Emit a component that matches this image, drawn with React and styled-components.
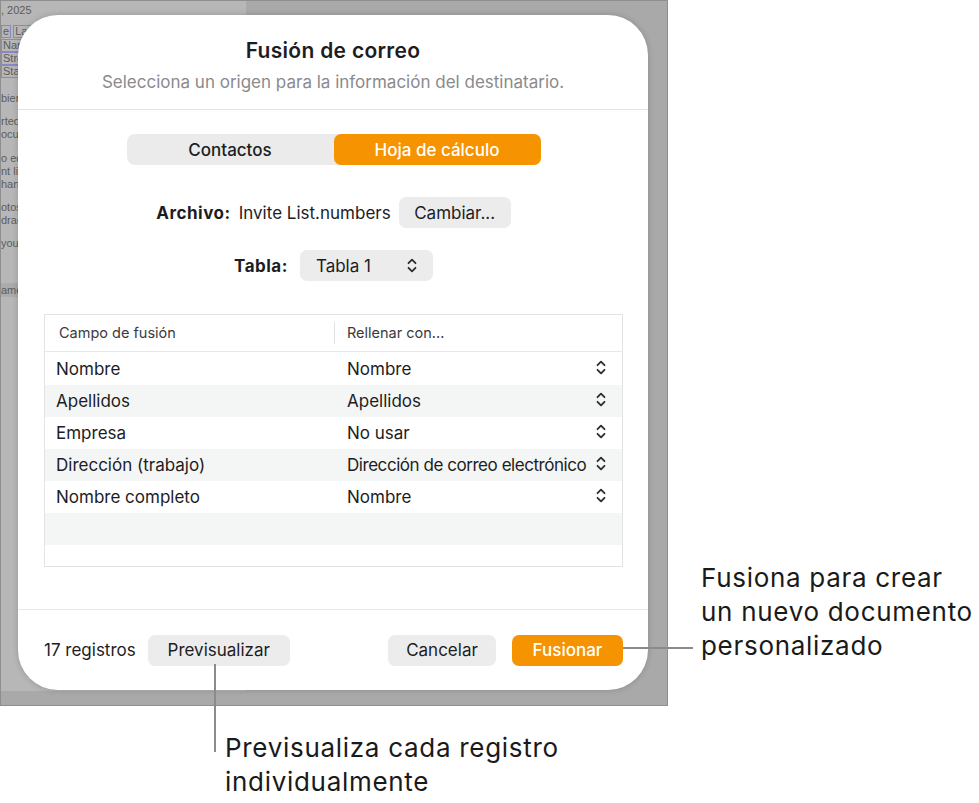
import React from 'react'
import styled, { createGlobalStyle } from 'styled-components'

const GlobalStyle = createGlobalStyle`
  html, body {
    margin: 0;
    padding: 0;
    background: #ffffff;
  }
  body {
    font-family: Inter, "Noto Sans", "Liberation Sans", sans-serif;
    color: #1d1d1f;
  }
`;

const Page = styled.div`
  position: relative;
  width: 979px;
  height: 803px;
  overflow: hidden;
  background: #ffffff;
`;

const Screen = styled.div`
  position: relative;
  box-sizing: border-box;
  width: 668px;
  height: 706px;
  border: 1px solid #8e8e8e;
  background: #a9a9a9;
  overflow: hidden;
`;

const DocPage = styled.div`
  width: 245px;
  height: 690px;
  background: #b7b7b7;
  display: flex;
  flex-direction: column;
  font-family: "Liberation Sans", Arial, sans-serif;
  font-size: 11px;
  color: #5c5c5c;
  padding-top: 3px;
  box-sizing: border-box;
`;

const DocLine = styled.div`
  white-space: nowrap;
  height: 13px;
  line-height: 13px;
  margin-top: ${({ $gap }) => $gap || 0}px;
`;

const FieldBox = styled.span`
  display: inline-block;
  border: 1px solid #8a86c9;
  padding: 0 1px;
  line-height: 11px;
  margin-right: 2px;
`;

const Band = styled.div`
  white-space: nowrap;
  height: 14px;
  line-height: 14px;
  margin-top: 33px;
  background: #ababab;
`;

const Dialog = styled.div`
  position: absolute;
  left: 17px;
  top: 14px;
  width: 630px;
  height: 675px;
  background: #ffffff;
  border-radius: 40px;
  box-shadow: 0 0 6px rgba(0, 0, 0, 0.18);
  display: flex;
  flex-direction: column;
`;

const Header = styled.div`
  display: flex;
  flex-direction: column;
  align-items: center;
  padding: 24px 0 17px;
  border-bottom: 1px solid #e4e4e4;
`;

const Title = styled.div`
  font-size: 21px;
  font-weight: 600;
  line-height: 24px;
  letter-spacing: 0.3px;
`;

const Subtitle = styled.div`
  margin-top: 9px;
  font-size: 17px;
  line-height: 20px;
  color: #8a8a8e;
`;

const Body = styled.div`
  flex: 1;
  display: flex;
  flex-direction: column;
  align-items: center;
  padding: 24px 25px 0 26px;
  border-bottom: 1px solid #e8e8e8;
`;

const Segmented = styled.div`
  display: grid;
  grid-template-columns: 1fr 1fr;
  width: 414px;
  height: 31px;
  background: #ebebeb;
  border-radius: 8px;
`;

const Segment = styled.div`
  display: flex;
  align-items: center;
  justify-content: center;
  border-radius: 7px;
  font-size: 17px;
  font-weight: 500;
  background: ${({ $active }) => ($active ? '#f69300' : 'transparent')};
  color: ${({ $active }) => ($active ? '#ffffff' : '#1d1d1f')};
`;

const FormRow = styled.div`
  display: flex;
  align-items: center;
  margin-top: ${({ $top }) => $top}px;
  gap: ${({ $gap }) => $gap}px;
  font-size: 17px;
`;

const Label = styled.span`
  font-weight: 700;
  letter-spacing: 0.5px;
`;

const Button = styled.div`
  display: flex;
  align-items: center;
  justify-content: ${({ $between }) => ($between ? 'space-between' : 'center')};
  box-sizing: border-box;
  height: 31px;
  width: ${({ $w }) => $w}px;
  margin-left: ${({ $ml }) => $ml || 0}px;
  padding: 0 ${({ $pad }) => $pad || 0}px;
  border-radius: 7px;
  background: ${({ $primary }) => ($primary ? '#f69300' : '#ececec')};
  color: ${({ $primary }) => ($primary ? '#ffffff' : '#1d1d1f')};
  font-size: 17px;
  font-weight: ${({ $primary }) => ($primary ? 500 : 400)};
`;

const Table = styled.div`
  margin-top: 33px;
  align-self: stretch;
  box-sizing: border-box;
  height: 253px;
  border: 1px solid #e3e3e3;
  overflow: hidden;
`;

const HeadRow = styled.div`
  display: grid;
  grid-template-columns: 290px 1fr;
  height: 36px;
  align-items: center;
  border-bottom: 1px solid #e8e8e8;
  margin-bottom: 1px;
  font-size: 14.5px;
  color: #3a3a3c;
`;

const HeadCell = styled.div`
  padding-left: ${({ $pad }) => $pad}px;
  height: 22px;
  line-height: 22px;
  border-right: ${({ $sep }) => ($sep ? '1px solid #e2e2e2' : 'none')};
`;

const Row = styled.div`
  display: grid;
  grid-template-columns: 290px 1fr 26px;
  align-items: center;
  height: 32px;
  font-size: 17px;
  background: ${({ $alt }) => ($alt ? '#f4f5f5' : '#ffffff')};
`;

const Cell = styled.div`
  padding-left: ${({ $pad }) => $pad}px;
  white-space: nowrap;
  letter-spacing: ${({ $tight }) => ($tight ? '-0.45px' : '0')};
`;

const Footer = styled.div`
  display: flex;
  align-items: center;
  height: 80px;
  padding: 0 25px 0 26px;
  font-size: 17px;
`;

const Count = styled.span`
  margin-right: 12px;
`;

const Spacer = styled.div`
  flex: 1;
`;

const Callout = styled.div`
  position: absolute;
  left: ${({ $x }) => $x}px;
  top: ${({ $y }) => $y}px;
  font-size: 26px;
  line-height: 34px;
  letter-spacing: 0.7px;
  color: #1a1a1a;
  white-space: nowrap;
`;

const Leader = styled.div`
  position: absolute;
  left: ${({ $x }) => $x}px;
  top: ${({ $y }) => $y}px;
  width: ${({ $w }) => $w}px;
  height: ${({ $h }) => $h}px;
  background: #8b8b8b;
`;

const Chevrons = () => (
  <svg width="10" height="15" viewBox="0 0 10 15" fill="none">
    <path d="M1.5 5.2 L5 1.7 L8.5 5.2" stroke="#2c2c2e" strokeWidth="1.8" strokeLinecap="round" strokeLinejoin="round" />
    <path d="M1.5 9.8 L5 13.3 L8.5 9.8" stroke="#2c2c2e" strokeWidth="1.8" strokeLinecap="round" strokeLinejoin="round" />
  </svg>
);

const rows = [
  ['Nombre', 'Nombre'],
  ['Apellidos', 'Apellidos'],
  ['Empresa', 'No usar'],
  ['Dirección (trabajo)', 'Dirección de correo electrónico'],
  ['Nombre completo', 'Nombre'],
  ['', ''],
  ['', ''],
];

const App = () => {
  return (
    <Page>
      <GlobalStyle />
      <Screen>
        <DocPage>
          <DocLine>, 2025</DocLine>
          <DocLine $gap={8}><FieldBox>e</FieldBox><FieldBox>Last Name</FieldBox></DocLine>
          <DocLine $gap={1}><FieldBox>Name</FieldBox></DocLine>
          <DocLine><FieldBox>Street</FieldBox></DocLine>
          <DocLine><FieldBox>State</FieldBox></DocLine>
          <DocLine $gap={14}>bienvenido a la plantilla</DocLine>
          <DocLine $gap={10}>rted with this template</DocLine>
          <DocLine>ocument placeholder text</DocLine>
          <DocLine $gap={11}>o edit the text, click</DocLine>
          <DocLine>nt lines of text here</DocLine>
          <DocLine>hange the look of it</DocLine>
          <DocLine $gap={10}>otos and images you</DocLine>
          <DocLine>drag them in place</DocLine>
          <DocLine $gap={10}>you can add more</DocLine>
          <Band>ame of the sender</Band>
        </DocPage>
        <Dialog>
          <Header>
            <Title>Fusión de correo</Title>
            <Subtitle>Selecciona un origen para la información del destinatario.</Subtitle>
          </Header>
          <Body>
            <Segmented>
              <Segment>Contactos</Segment>
              <Segment $active>Hoja de cálculo</Segment>
            </Segmented>
            <FormRow $top={32} $gap={8}>
              <Label>Archivo:</Label>
              <span>Invite List.numbers</span>
              <Button $w={112}>Cambiar...</Button>
            </FormRow>
            <FormRow $top={22} $gap={12}>
              <Label>Tabla:</Label>
              <Button $w={133} $pad={16} $between>
                <span>Tabla 1</span>
                <Chevrons />
              </Button>
            </FormRow>
            <Table>
              <HeadRow>
                <HeadCell $pad={14} $sep>Campo de fusión</HeadCell>
                <HeadCell $pad={12}>Rellenar con...</HeadCell>
              </HeadRow>
              {rows.map((r, i) => (
                <Row key={i} $alt={i % 2 === 1}>
                  <Cell $pad={11}>{r[0]}</Cell>
                  <Cell $pad={12} $tight={r[1].length > 25}>{r[1]}</Cell>
                  <Cell $pad={0}>{r[1] ? <Chevrons /> : null}</Cell>
                </Row>
              ))}
            </Table>
            <div style={{ height: 42 }} />
          </Body>
          <Footer>
            <Count>17 registros</Count>
            <Button $w={142}>Previsualizar</Button>
            <Spacer />
            <Button $w={108}>Cancelar</Button>
            <Button $w={111} $ml={16} $primary>Fusionar</Button>
          </Footer>
        </Dialog>
      </Screen>
      <Leader $x={623} $y={647} $w={70} $h={2} />
      <Callout $x={701} $y={561}>
        Fusiona para crear
        <br />
        un nuevo documento
        <br />
        personalizado
      </Callout>
      <Leader $x={214} $y={664} $w={2} $h={88} />
      <Callout $x={225} $y={731}>
        Previsualiza cada registro
        <br />
        individualmente
      </Callout>
    </Page>
  )
}

export default App
